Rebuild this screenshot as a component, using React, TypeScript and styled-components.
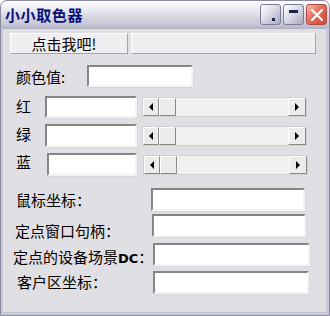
import React from "react";
import styled, { createGlobalStyle } from "styled-components";

const GlobalStyle = createGlobalStyle`
  html, body {
    margin: 0;
    padding: 0;
    background: #ffffff;
  }
  body {
    font-family: "Noto Sans CJK SC", "Liberation Sans", sans-serif;
  }
`;

const Frame = styled.div`
  width: 330px;
  height: 316px;
  box-sizing: border-box;
  display: flex;
  flex-direction: column;
  background: #c8c8d6;
  border: 1px solid #8a8aa2;
  border-radius: 7px 7px 0 0;
  overflow: hidden;
`;

const TitleBar = styled.div`
  height: 27px;
  flex-shrink: 0;
  display: flex;
  align-items: center;
  padding: 0 2px 0 4px;
  background: linear-gradient(
    to bottom,
    #ffffff 0%,
    #f2f2f8 20%,
    #dadae6 55%,
    #c8c8d6 85%,
    #b8b8c8 100%
  );
`;

const Title = styled.span`
  flex: 1;
  font-size: 15px;
  font-weight: 700;
  line-height: 1;
  color: #081078;
  letter-spacing: 0.6px;
`;

const CaptionButton = styled.div<{ $close?: boolean }>`
  position: relative;
  width: 21px;
  height: 21px;
  margin-left: 2px;
  box-sizing: border-box;
  border: 1px solid ${(p) => (p.$close ? "#b04a40" : "#7c7c98")};
  border-radius: 3px;
  background: ${(p) =>
    p.$close
      ? "linear-gradient(135deg, #f4bcae 0%, #e4705e 45%, #cc4434 100%)"
      : "linear-gradient(135deg, #ffffff 0%, #dcdce8 45%, #a8a8bf 100%)"};
  display: flex;
  align-items: center;
  justify-content: center;
`;

const DotGlyph = styled.span`
  position: absolute;
  right: 5px;
  bottom: 3px;
  width: 3px;
  height: 3px;
  background: #1e2250;
`;

const BarGlyph = styled.span`
  position: absolute;
  left: 5px;
  top: 5px;
  width: 9px;
  height: 3px;
  background: #1e2250;
`;

const Client = styled.div`
  flex: 1;
  margin: 0 3px 3px 2px;
  background: #e0dfe3;
  border-top: 1px solid #b0b0c2;
  display: flex;
  flex-direction: column;
  font-size: 15px;
  color: #000;
`;

const TopRow = styled.div`
  display: flex;
  gap: 3px;
  margin: 4px 0 0 7px;
`;

const FlatButton = styled.div<{ $w: number }>`
  width: ${(p) => p.$w}px;
  height: 21px;
  box-sizing: border-box;
  background: #efeff1;
  border: 1px solid;
  border-color: #ffffff #a4a4ac #a4a4ac #ffffff;
  display: flex;
  align-items: center;
  justify-content: center;
  padding-right: 10px;
  line-height: 1;
  font-size: 15px;
`;

const Row = styled.div<{ $top: number; $left: number }>`
  display: flex;
  align-items: center;
  margin-top: ${(p) => p.$top}px;
  padding-left: ${(p) => p.$left}px;
`;

const Label = styled.span<{ $w: number; $dy?: number }>`
  width: ${(p) => p.$w}px;
  flex-shrink: 0;
  white-space: nowrap;
  line-height: 1;
  font-size: 15px;
  transform: translateY(${(p) => p.$dy ?? 0}px);
`;

const Latin = styled.span`
  font-family: "DejaVu Sans", "Liberation Sans", sans-serif;
  font-weight: 700;
  font-size: 13px;
`;

const Field = styled.div<{ $w: number; $h?: number }>`
  width: ${(p) => p.$w}px;
  height: ${(p) => p.$h ?? 22}px;
  flex-shrink: 0;
  box-sizing: border-box;
  background: #ffffff;
  border: 2px solid;
  border-color: #858585 #f4f4f4 #f4f4f4 #858585;
  box-shadow: 1px 1px 0 #d8d8dc;
`;

const ScrollBar = styled.div<{ $gap: number }>`
  display: flex;
  width: 165px;
  height: 20px;
  margin-left: ${(p) => p.$gap}px;
  box-sizing: border-box;
  border: 1px solid #d0d0d4;
`;

const RaisedBox = styled.div<{ $w: number }>`
  width: ${(p) => p.$w}px;
  flex-shrink: 0;
  box-sizing: border-box;
  background: #ececec;
  border: 1px solid;
  border-color: #ffffff #8a8a8a #8a8a8a #ffffff;
  display: flex;
  align-items: center;
  justify-content: center;
`;

const Track = styled.div`
  flex: 1;
  background-color: #f4f4f4;
  background-image: conic-gradient(
    #e6e6e6 0 25%,
    #fcfcfc 0 50%,
    #e6e6e6 0 75%,
    #fcfcfc 0
  );
  background-size: 2px 2px;
`;

const Arrow = styled.span<{ $dir: "left" | "right" }>`
  width: 0;
  height: 0;
  border-top: 4px solid transparent;
  border-bottom: 4px solid transparent;
  ${(p) =>
    p.$dir === "left"
      ? "border-right: 4px solid #000;"
      : "border-left: 4px solid #000;"}
`;

const Slider = ({ gap }: { gap: number }) => (
  <ScrollBar $gap={gap}>
    <RaisedBox $w={16}>
      <Arrow $dir="left" />
    </RaisedBox>
    <RaisedBox $w={17} />
    <Track />
    <RaisedBox $w={18}>
      <Arrow $dir="right" />
    </RaisedBox>
  </ScrollBar>
);

export default function App() {
  return (
    <>
      <GlobalStyle />
      <Frame>
        <TitleBar>
          <Title>小小取色器</Title>
          <CaptionButton>
            <DotGlyph />
          </CaptionButton>
          <CaptionButton>
            <BarGlyph />
          </CaptionButton>
          <CaptionButton $close>
            <svg width="14" height="14" viewBox="0 0 14 14">
              <path
                d="M2 2 L12 12 M12 2 L2 12"
                stroke="#ffffff"
                strokeWidth="2.2"
                strokeLinecap="round"
              />
            </svg>
          </CaptionButton>
        </TitleBar>
        <Client>
          <TopRow>
            <FlatButton $w={118}>点击我吧!</FlatButton>
            <FlatButton $w={185} />
          </TopRow>

          <Row $top={11} $left={13}>
            <Label $w={71} $dy={0}>颜色值:</Label>
            <Field $w={106} />
          </Row>

          <Row $top={9} $left={13}>
            <Label $w={29} $dy={-2}>红</Label>
            <Field $w={92} />
            <Slider gap={5} />
          </Row>

          <Row $top={6} $left={13}>
            <Label $w={29} $dy={-2}>绿</Label>
            <Field $w={92} $h={23} />
            <Slider gap={5} />
          </Row>

          <Row $top={6} $left={13}>
            <Label $w={31} $dy={-3}>蓝</Label>
            <Field $w={90} $h={23} />
            <Slider gap={6} />
          </Row>

          <Row $top={12} $left={13}>
            <Label $w={135} $dy={0}>鼠标坐标：</Label>
            <Field $w={154} $h={23} />
          </Row>

          <Row $top={3} $left={12}>
            <Label $w={137} $dy={5}>定点窗口句柄：</Label>
            <Field $w={154} $h={23} />
          </Row>

          <Row $top={6} $left={10}>
            <Label $w={140} $dy={2}>
              定点的设备场景<Latin>DC</Latin>：
            </Label>
            <Field $w={157} $h={23} />
          </Row>

          <Row $top={5} $left={14}>
            <Label $w={136} $dy={-1}>客户区坐标：</Label>
            <Field $w={156} $h={23} />
          </Row>
        </Client>
      </Frame>
    </>
  );
}
